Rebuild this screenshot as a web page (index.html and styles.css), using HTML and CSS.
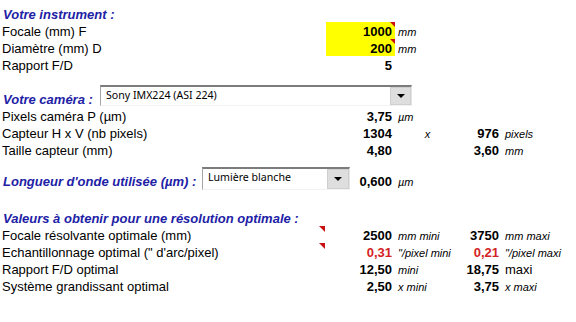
FILE: index.html
```html
<!DOCTYPE html>
<html lang="fr">
<head>
    <meta charset="UTF-8">
    <title>Résolution optimale</title>
    <link rel="stylesheet" href="styles.css">
</head>
<body>
    <div class="sheet">
        <div class="row">
            <span class="label title">Votre instrument :</span>
        </div>
        <div class="row">
            <span class="label">Focale (mm) F</span>
            <span class="val input note">1000</span>
            <span class="unit">mm</span>
        </div>
        <div class="row">
            <span class="label">Diamètre (mm) D</span>
            <span class="val input note">200</span>
            <span class="unit">mm</span>
        </div>
        <div class="row">
            <span class="label">Rapport F/D</span>
            <span class="val">5</span>
        </div>

        <div class="gap gap-17"></div>

        <!-- camera picker -->
        <div class="row flex">
            <span class="label title cam-label">Votre caméra :</span>
            <div class="combo cam-combo">
                <span class="combo-text">Sony IMX224 (ASI 224)</span>
                <span class="combo-btn"><span class="arrow"></span></span>
            </div>
        </div>
        <div class="row">
            <span class="label">Pixels caméra P (µm)</span>
            <span class="val">3,75</span>
            <span class="unit">µm</span>
        </div>
        <div class="row">
            <span class="label">Capteur H x V (nb pixels)</span>
            <span class="val">1304</span>
            <span class="unit center">x</span>
            <span class="val">976</span>
            <span class="unit">pixels</span>
        </div>
        <div class="row">
            <span class="label">Taille capteur (mm)</span>
            <span class="val">4,80</span>
            <span class="unit"></span>
            <span class="val">3,60</span>
            <span class="unit">mm</span>
        </div>

        <div class="gap gap-14"></div>

        <!-- wavelength picker -->
        <div class="row flex">
            <span class="label title wave-label">Longueur d'onde utilisée (µm) :</span>
            <div class="combo wave-combo">
                <span class="combo-text">Lumière blanche</span>
                <span class="combo-btn"><span class="arrow"></span></span>
            </div>
            <span class="val wave-val">0,600</span>
            <span class="unit">µm</span>
        </div>

        <div class="gap gap-20"></div>

        <div class="row">
            <span class="label title">Valeurs à obtenir pour une résolution optimale :</span>
        </div>
        <div class="row">
            <span class="label note">Focale résolvante optimale (mm)</span>
            <span class="val">2500</span>
            <span class="unit">mm mini</span>
            <span class="val">3750</span>
            <span class="unit">mm maxi</span>
        </div>
        <div class="row">
            <span class="label note">Echantillonnage optimal (" d'arc/pixel)</span>
            <span class="val red">0,31</span>
            <span class="unit">"/pixel mini</span>
            <span class="val red">0,21</span>
            <span class="unit">"/pixel maxi</span>
        </div>
        <div class="row">
            <span class="label">Rapport F/D optimal</span>
            <span class="val">12,50</span>
            <span class="unit">mini</span>
            <span class="val">18,75</span>
            <span class="unit plain">maxi</span>
        </div>
        <div class="row">
            <span class="label">Système grandissant optimal</span>
            <span class="val">2,50</span>
            <span class="unit">x mini</span>
            <span class="val">3,75</span>
            <span class="unit">x maxi</span>
        </div>
    </div>
</body>
</html>
```

FILE: styles.css
```css
body {
    margin: 0;
    background: #fff;
    color: #000;
    font-family: "Liberation Sans", Arial, sans-serif;
    font-size: 13px;
}
.sheet {
    padding-top: 5px;
}
.row {
    display: grid;
    grid-template-columns: 326px 69px 65px 42px 1fr;
    height: 17px;
}
.row > span {
    box-sizing: border-box;
    height: 17px;
    padding-top: 3px;
    line-height: 14px;
    white-space: nowrap;
}
.gap-17 { height: 17px; }
.gap-14 { height: 14px; }
.gap-20 { height: 20px; }

.label {
    padding-left: 2px;
}
.title {
    padding-left: 3px;
    font-weight: bold;
    font-style: italic;
    color: #2121a6;
}
.val {
    text-align: right;
    padding-right: 3px;
    font-weight: bold;
}
.input {
    background: #ffff00;
}
.red {
    color: #d42323;
}
.unit {
    padding-left: 3px;
    font-size: 11px;
    font-style: italic;
}
.unit.center {
    text-align: center;
    padding-left: 0;
}
.unit.plain {
    font-size: 13px;
    font-style: normal;
}

/* little red comment marks, like in the spreadsheet */
.note {
    position: relative;
}
.note::after {
    content: "";
    position: absolute;
    top: 0;
    right: 0;
    border-top: 5px solid #c81010;
    border-left: 5px solid transparent;
}
.label.note::after {
    right: 1px;
    border-top-width: 6px;
    border-left-width: 6px;
}

/* rows holding a drop-down list */
.row.flex {
    display: flex;
    align-items: flex-end;
}
.cam-label {
    width: 100px;
}
.wave-label {
    width: 202px;
}
.combo {
    box-sizing: border-box;
    display: flex;
    align-items: stretch;
    background: #fff;
    border-top: 2px solid #7c7c7c;
    border-left: 1px solid #a4a4a4;
    border-right: 1px solid #e4e4e4;
    border-bottom: 1px solid #f2f2f2;
    font-family: "Noto Sans", "DejaVu Sans", sans-serif;
    font-size: 10.6px;
}
.cam-combo {
    width: 312px;
    height: 21px;
    margin-bottom: 1px;
}
.wave-combo {
    width: 148px;
    height: 23px;
    margin-bottom: -1px;
}
.combo-text {
    flex: 1;
    padding-left: 5px;
    line-height: 17px;
}
.combo-btn {
    width: 19px;
    display: flex;
    align-items: center;
    justify-content: center;
    background: #dedede;
    border: 1px solid #cfcfcf;
}
.wave-combo .combo-btn {
    width: 20px;
}
.arrow {
    width: 0;
    height: 0;
    border-left: 4px solid transparent;
    border-right: 4px solid transparent;
    border-top: 4px solid #000;
}
.wave-val {
    width: 45px;
}
```
